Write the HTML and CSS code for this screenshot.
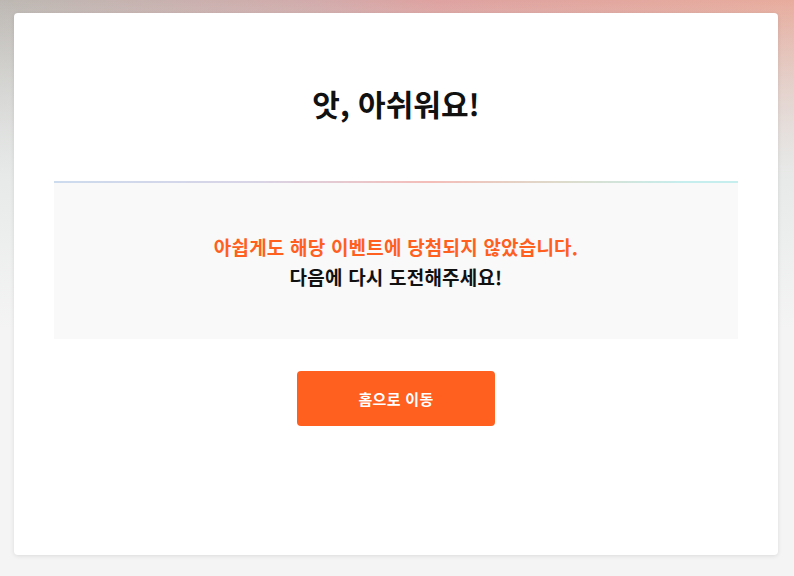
FILE: index.html
```html
<!DOCTYPE html>
<html lang="ko">
<head>
<meta charset="utf-8">
<link rel="stylesheet" href="styles.css">
</head>
<body>
<div class="page">
  <main class="card">
    <h1 class="title">앗, 아쉬워요!</h1>
    <section class="result">
      <p class="msg-main">아쉽게도 해당 이벤트에 당첨되지 않았습니다.</p>
      <p class="msg-sub">다음에 다시 도전해주세요!</p>
    </section>
    <div class="actions">
      <button class="btn-home" type="button">홈으로 이동</button>
    </div>
  </main>
</div>
</body>
</html>
```
FILE: styles.css
```css
html, body {
  margin: 0;
  padding: 0;
}
body {
  width: 794px;
  height: 576px;
  font-family: "Noto Sans CJK KR", "Noto Sans", sans-serif;
  background:
    linear-gradient(180deg, rgba(244,244,244,0) 0px, rgba(244,244,244,0.6) 170px, #f4f4f4 330px),
    linear-gradient(180deg, rgba(208,214,212,0) 0px, #d3d9d7 180px),
    linear-gradient(90deg, #bdb8b3 0%, #d2abab 40%, #dea2a0 55%, #e8ac9d 100%);
  background-color: #f4f4f4;
}
.page {
  padding: 13px 16px 21px 14px;
}
.card {
  background: #fff;
  border-radius: 4px;
  box-shadow: 0 1px 4px rgba(0,0,0,0.10);
  height: 542px;
  box-sizing: border-box;
  padding: 0 40px;
}
.title {
  margin: 0;
  padding-top: 70px;
  height: 168px;
  box-sizing: border-box;
  text-align: center;
  font-size: 30px;
  font-weight: 700;
  letter-spacing: 0;
  line-height: 40px;
  color: #111;
}
.result {
  background: #f9f9f9;
  border-top: 2px solid transparent;
  border-image: linear-gradient(90deg, #cddbee 0%, #d8d4e6 30%, #f4bdb8 55%, #dcdccc 75%, #c6eeee 92%, #c6eeee 100%) 1;
  height: 158px;
  box-sizing: border-box;
  padding-top: 49px;
  text-align: center;
}
.result p {
  margin: 0;
  font-size: 19px;
  line-height: 30px;
  font-weight: 700;
  letter-spacing: 0.2px;
}
.msg-main {
  color: #ff5f1f;
}
.msg-sub {
  color: #111;
}
.actions {
  display: flex;
  justify-content: center;
  padding-top: 32px;
}
.btn-home {
  width: 198px;
  height: 55px;
  border: none;
  border-radius: 4px;
  background: #ff5f1f;
  color: #fff;
  font-family: "Noto Sans CJK KR", sans-serif;
  font-size: 15px;
  font-weight: 700;
  letter-spacing: 0.3px;
  cursor: pointer;
}
```
